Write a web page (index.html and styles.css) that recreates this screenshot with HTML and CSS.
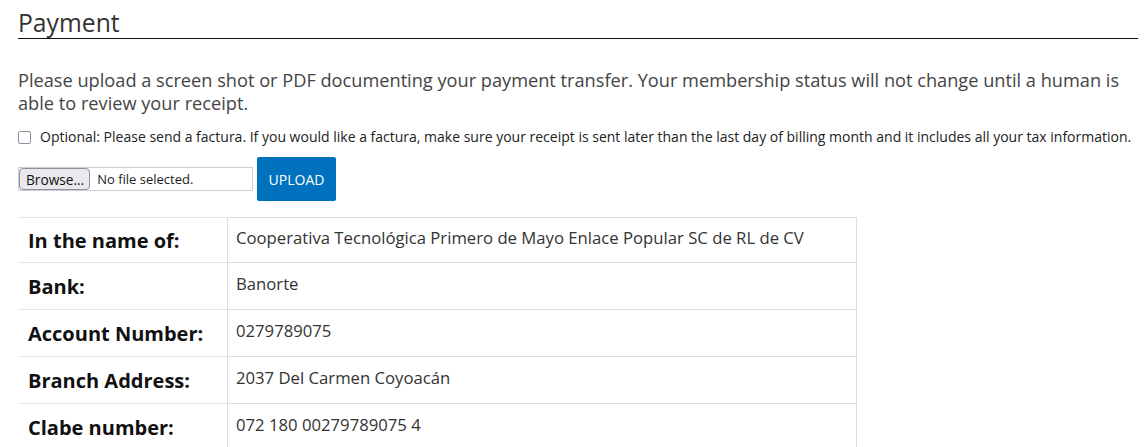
FILE: index.html
```html
<!DOCTYPE html>
<html lang="en">
<head>
<meta charset="utf-8">
<title>Payment</title>
<link rel="stylesheet" href="styles.css">
</head>
<body>
<main class="page">
  <h2 class="title">Payment</h2>
  <p class="intro">Please upload a screen shot or PDF documenting your payment transfer. Your membership status will not change until a human is able to review your receipt.</p>
  <label class="check-row">
    <span class="checkbox"></span>
    <span>Optional: Please send a factura. If you would like a factura, make sure your receipt is sent later than the last day of billing month and it includes all your tax information.</span>
  </label>
  <form class="upload-row">
    <div class="file-input">
      <span class="browse">Browse…</span>
      <span class="file-name">No file selected.</span>
    </div>
    <button type="button" class="upload-btn">UPLOAD</button>
  </form>
  <table class="bank">
    <tr class="first"><th>In the name of:</th><td>Cooperativa Tecnológica Primero de Mayo Enlace Popular SC de RL de CV</td></tr>
    <tr><th>Bank:</th><td>Banorte</td></tr>
    <tr><th>Account Number:</th><td>0279789075</td></tr>
    <tr><th>Branch Address:</th><td>2037 Del Carmen Coyoacán</td></tr>
    <tr><th>Clabe number:</th><td>072 180 00279789075 4</td></tr>
  </table>
</main>
</body>
</html>
```

FILE: styles.css
```css
html, body {
  margin: 0;
  padding: 0;
  background: #fff;
}
body {
  font-family: "Open Sans", "Liberation Sans", sans-serif;
  color: #333;
}
.page {
  width: 1120px;
  padding: 0 6px 0 18px;
}
.title {
  margin: 0;
  padding-top: 8px;
  font-size: 24.7px;
  font-weight: 400;
  line-height: 30px;
  color: #333;
  border-bottom: 1px solid #111;
}
.intro {
  margin: 30px 0 0;
  font-size: 18.2px;
  line-height: 23px;
  color: #444;
}
.check-row {
  display: flex;
  align-items: center;
  gap: 9px;
  margin-top: 12px;
  font-size: 14px;
  line-height: 20px;
  color: #222;
}
.checkbox {
  width: 11px;
  height: 11px;
  border: 1px solid #8f8f9d;
  border-radius: 2px;
  flex: none;
}
.upload-row {
  display: flex;
  align-items: center;
  gap: 4px;
  margin: 10px 0 0;
}
.file-input {
  display: flex;
  align-items: center;
  width: 233px;
  height: 22px;
  border: 1px solid #c6d0da;
  font-size: 13px;
}
.browse {
  box-sizing: border-box;
  height: 22px;
  padding: 0 5px 0 6px;
  display: flex;
  align-items: center;
  background: #e9e9ed;
  border: 1px solid #8f8f9d;
  border-radius: 4px;
  color: #111;
  font-size: 13.7px;
}
.file-name {
  margin-left: 7px;
  color: #222;
}
.upload-btn {
  width: 79px;
  height: 44px;
  border: none;
  border-radius: 2px;
  background: #0071bd;
  color: #fff;
  font-family: "Open Sans", "Liberation Sans", sans-serif;
  font-size: 14px;
  padding: 0;
}
.bank {
  margin-top: 16px;
  border-collapse: collapse;
  width: 839px;
}
.bank th {
  width: 199px;
  padding: 2px 0 2px 10px;
  height: 42px;
  text-align: left;
  vertical-align: middle;
  font-size: 20px;
  font-weight: 700;
  color: #111;
  border-top: 1px solid #e6e6e6;
}
.bank .first th {
  height: 40px;
}
.bank td {
  padding: 0 0 6px 8px;
  vertical-align: middle;
  font-size: 16.7px;
  color: #333;
  border: 1px solid #dcdcdc;
  border-bottom: none;
}
```
